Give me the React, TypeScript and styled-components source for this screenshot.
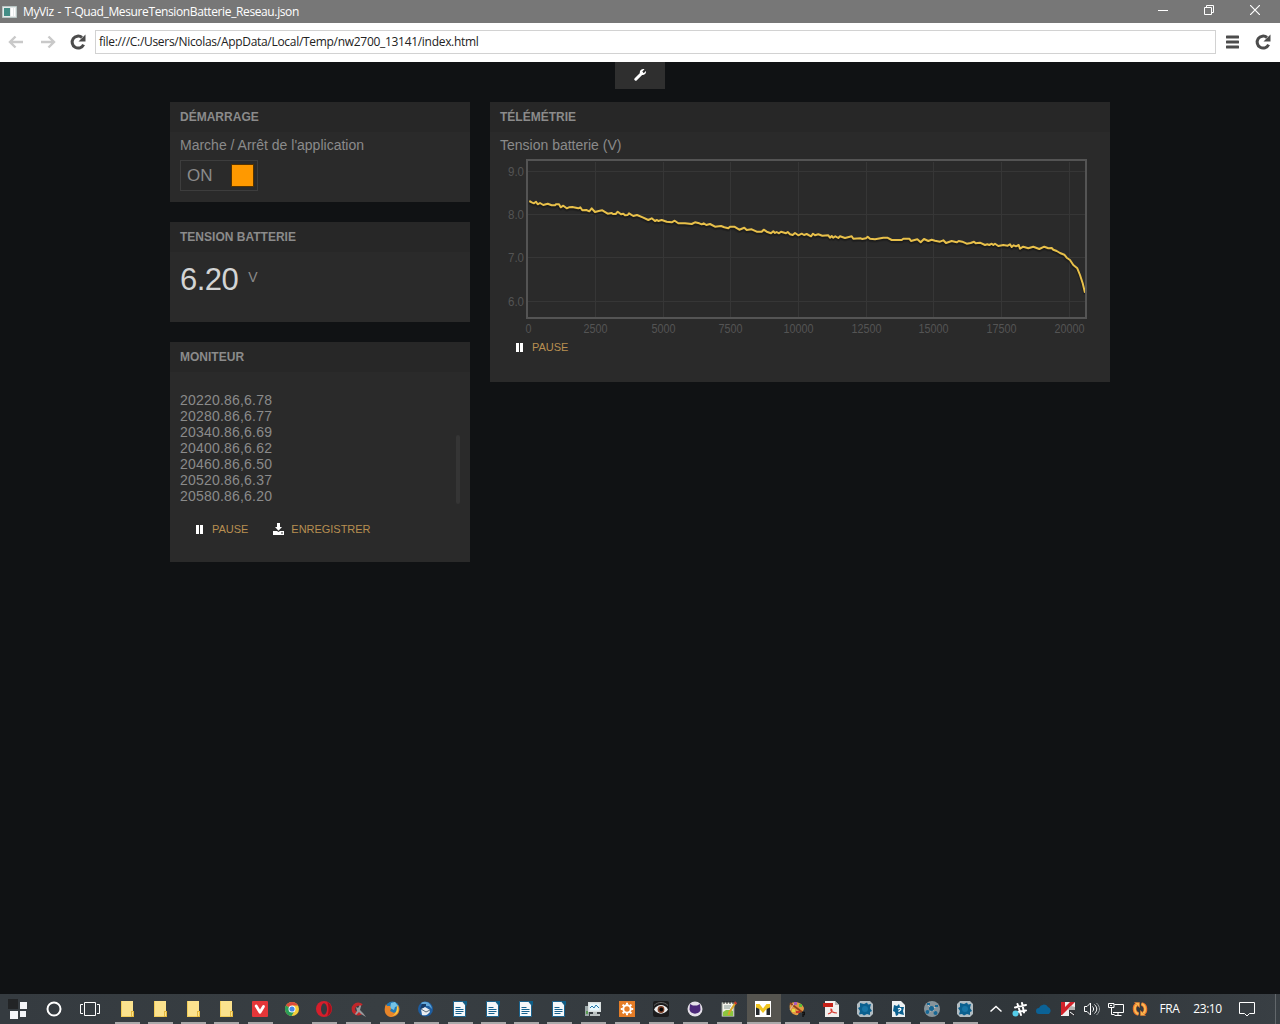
import React from "react";
import styled, { createGlobalStyle } from "styled-components";

const GlobalStyle = createGlobalStyle`
  * { box-sizing: border-box; }
  html, body { margin: 0; padding: 0; background: #101214; }
  body { font-family: "Liberation Sans", Arial, sans-serif; overflow: hidden; }
  svg { display: block; flex: none; }
`;

const Screen = styled.div`
  width: 1280px;
  height: 1024px;
  display: flex;
  flex-direction: column;
  background: #101214;
`;

/* ---------- window chrome ---------- */

const TitleBar = styled.header`
  height: 23px;
  flex: none;
  display: flex;
  align-items: center;
  padding: 0 2px;
  background: #777;
  color: #fff;
`;

const WindowTitle = styled.span`
  flex: 1;
  margin-left: 6px;
  font: 12px/22px "Open Sans", "Noto Sans", sans-serif;
  letter-spacing: -0.38px;
  word-spacing: 1px;
  white-space: nowrap;
`;

const WindowButton = styled.div`
  width: 46px;
  height: 23px;
  display: flex;
  align-items: flex-start;
  justify-content: center;
  padding-top: 5px;
`;

const NavBar = styled.nav`
  height: 39px;
  flex: none;
  display: flex;
  align-items: center;
  padding-bottom: 1px;
  background: #fff;
`;

const NavButton = styled.div<{ $w: number }>`
  width: ${(p) => p.$w}px;
  display: flex;
  justify-content: center;
`;

const AddressField = styled.div`
  width: 1121px;
  height: 24px;
  margin-left: 2px;
  padding-left: 3px;
  border: 1px solid #d2d2d2;
  color: #222;
  font: 12px/22px "Open Sans", "Noto Sans", sans-serif;
  letter-spacing: -0.3px;
  white-space: nowrap;
`;

/* ---------- dashboard ---------- */

const Page = styled.main`
  flex: 1;
  min-height: 0;
  display: flex;
  flex-direction: column;
  align-items: center;
`;

const ToolsTab = styled.div`
  width: 50px;
  height: 27px;
  display: flex;
  align-items: center;
  justify-content: center;
  padding-bottom: 1px;
  background: #2f2f2f;
`;

const Board = styled.div`
  width: 940px;
  margin-top: 13px;
  display: flex;
  align-items: flex-start;
  gap: 20px;
`;

const Column = styled.div<{ $w: number }>`
  width: ${(p) => p.$w}px;
  display: flex;
  flex-direction: column;
  gap: 20px;
`;

const Panel = styled.section<{ $h: number }>`
  height: ${(p) => p.$h}px;
  display: flex;
  flex-direction: column;
  background: #2a2a2a;
`;

const PanelTitle = styled.h2`
  margin: 0;
  height: 30px;
  flex: none;
  padding-left: 10px;
  background: #272727;
  color: #8b8b8b;
  font-size: 12px;
  font-weight: bold;
  line-height: 30px;
  letter-spacing: 0.01px;
`;

const PanelBody = styled.div`
  flex: 1;
  min-height: 0;
  padding: 0 10px;
`;

const Label = styled.div`
  height: 28px;
  color: #8b8b8b;
  font-size: 14px;
  line-height: 27px;
`;

const Toggle = styled.div`
  width: 78px;
  height: 31px;
  display: flex;
  align-items: center;
  justify-content: space-between;
  padding: 0 3px 0 6px;
  border: 1px solid #3d3d3d;
  color: #8b8b8b;
  font-size: 17px;
`;

const Knob = styled.div`
  width: 23px;
  height: 23px;
  background: #ff9900;
  border: 1px solid #553300;
`;

const Reading = styled.div`
  display: flex;
  align-items: flex-start;
  padding-top: 10px;
`;

const ReadingValue = styled.span`
  color: #d3d4d4;
  font-size: 31px;
  line-height: 36px;
  letter-spacing: -0.5px;
`;

const ReadingUnit = styled.span`
  margin-left: 10px;
  color: #8b8b8b;
  font-size: 14px;
  line-height: 30px;
`;

const Monitor = styled.div`
  height: 112px;
  margin-top: 20px;
  display: flex;
  justify-content: space-between;
  align-items: flex-end;
`;

const MonitorLines = styled.div`
  align-self: flex-start;
  color: #8b8b8b;
  font-size: 14px;
  line-height: 16px;
  letter-spacing: 0.2px;
`;

const ScrollThumb = styled.div`
  width: 4px;
  height: 69px;
  border-radius: 2px;
  background: #353535;
`;

const Actions = styled.div<{ $top: number }>`
  display: flex;
  gap: 25px;
  margin-top: ${(p) => p.$top}px;
  padding-left: 16px;
`;

const Action = styled.div`
  height: 16px;
  display: flex;
  align-items: center;
  color: #b88f51;
  font-size: 11px;
  line-height: 16px;
`;

const ActionText = styled.span<{ $gap: number }>`
  margin-left: ${(p) => p.$gap}px;
  letter-spacing: -0.03px;
`;

const ChartSlot = styled.div`
  height: 178px;
  svg { overflow: visible; }
`;

const ChartText = styled.text`
  fill: #545454;
  font-family: "Liberation Sans", Arial, sans-serif;
  font-size: 12px;
`;

/* ---------- taskbar ---------- */

const Taskbar = styled.footer`
  height: 30px;
  flex: none;
  display: flex;
  background: linear-gradient(90deg, #353b40, #383e42 30%, #33393e 62%, #30363a 80%, #393f44);
  color: #fff;
`;

const TaskCell = styled.div<{ $w: number; $open?: boolean; $active?: boolean }>`
  width: ${(p) => p.$w}px;
  height: 30px;
  flex: none;
  display: flex;
  flex-direction: column;
  align-items: flex-start;
  padding-top: 7px;
  background: ${(p) => (p.$active ? "#55544f" : "transparent")};
  svg { margin-left: 8px; }
  &::after {
    content: "";
    display: ${(p) => (p.$open ? "block" : "none")};
    width: ${(p) => (p.$active ? "100%" : "25px")};
    height: 2px;
    margin: 5px 0 0 ${(p) => (p.$active ? 0 : 4)}px;
    background: #aaa9aa;
  }
`;

const LauncherCell = styled.div<{ $w: number }>`
  width: ${(p) => p.$w}px;
  display: flex;
  align-items: center;
  justify-content: center;
  flex: none;
`;

const TaskList = styled.div`
  display: flex;
  width: 873px;
  flex: none;
  margin-left: 3px;
`;

const TrayText = styled.span<{ $w: number }>`
  width: ${(p) => p.$w}px;
  text-align: center;
  font: 12px/29px "Open Sans", "Noto Sans", sans-serif;
  letter-spacing: -0.45px;
`;

const DesktopEdge = styled.div`
  width: 5px;
  margin-left: auto;
  border-left: 1px solid #62676b;
`;

/* ---------- icons ---------- */

const Reload = () => (
  <svg width="18" height="18" viewBox="0 0 18 18">
    <path d="M14.600 11.600A6 6 0 1 1 13 4.500" fill="none" stroke="#4c4c4c" strokeWidth="3" />
    <path d="M16.500 1.400v7H9.500z" fill="#4c4c4c" />
  </svg>
);

const Arrow = ({ flip }: { flip?: boolean }) => (
  <svg width="16" height="14" viewBox="0 0 16 14">
    <path
      d="M15 7H2.500M7.500 1.500 2 7l5.500 5.500"
      transform={flip ? "translate(16 0) scale(-1 1)" : undefined}
      fill="none"
      stroke="#c9c9c9"
      strokeWidth="2.400"
    />
  </svg>
);

const PauseIcon = () => (
  <svg width="8" height="10" viewBox="0 0 8 10" fill="#fff">
    <path d="M0 1h3v9H0zM4 1h3v9H4z" />
  </svg>
);

const SaveIcon = () => (
  <svg width="11" height="12" viewBox="0 0 11 12" fill="#fff">
    <path d="M4 0h3v4h2L5.500 7.700 2 4h2zM0 8h4l1.500 1L7 8h4v4H0z" />
    <path d="M8 9.500h2v1H8z" fill="#2a2a2a" />
  </svg>
);

const Doc = () => (
  <>
    <path d="M1.500.5h9L13.500 4v11.500h-12z" fill="#f5f8fa" stroke="#1b648e" />
    <path d="M10.500 0H15v5z" fill="#0d5e88" />
    <path d="M3.500 6.500h5M3.500 8.500h8M3.500 10.500h8M3.500 12.500h6" stroke="#17628e" strokeWidth="1.200" />
  </>
);

const Splat = () => (
  <>
    <path d="M3 0h10l3 3v10l-3 3H3l-3-3V3z" fill="#b2bdc3" />
    <path d="m3 2 4 1 3-1.500 1 2 3-.5-1 4 2 3-2 1v3l-3-1-3 1.500L5 13l-3 .5L3 10 1 7l2-1z" fill="#0b608f" />
    <circle cx="8" cy="8" r="3" fill="#1875a6" />
  </>
);

const art: Record<string, React.ReactNode> = {
  folder: (
    <>
      <path d="M2 0h12v10h1v6H2z" fill="#fbe28e" />
      <path d="M2 0h1v16H2zM2 15h12v1H2z" fill="#f1cc59" />
      <path d="M12 10h3v6h-3z" fill="#e4b83e" />
      <path d="M13 11h1v4h-1z" fill="#fbe28e" />
    </>
  ),
  vivaldi: (
    <>
      <rect width="16" height="16" rx="1" fill="#e43639" />
      <path d="M4.200 5 8 11.300 11.500 5.500" fill="none" stroke="#fff" strokeWidth="2.800" strokeLinecap="round" strokeLinejoin="round" />
    </>
  ),
  chrome: (
    <>
      <circle cx="8" cy="8" r="7" fill="#f4ce3c" />
      <path d="M8 8 1.900 4.500A7 7 0 0 1 14.100 4.500H8z" fill="#db4a3c" />
      <path d="M1.900 4.500A7 7 0 0 0 7.500 15L11 9 8 8z" fill="#2b9e58" />
      <circle cx="8" cy="8" r="3.500" fill="#fff" />
      <circle cx="8" cy="8" r="2.600" fill="#4487e8" />
    </>
  ),
  opera: (
    <>
      <circle cx="8" cy="8" r="8" fill="#d51e2b" />
      <ellipse cx="8" cy="8" rx="3" ry="5.700" fill="#343a3f" />
      <path d="M11 1c6 3 6 11 0 14 2-3 2-11 0-14z" fill="#a3101c" />
    </>
  ),
  ccleaner: (
    <>
      <path d="M11.500 4.500A4.800 4.800 0 1 0 11.500 11.500" fill="none" stroke="#c1272a" strokeWidth="3.600" />
      <path d="m6 6 2 1 2-3 1 1-1 4 3 3 3 4-5-3-2-2-3 3-1-1 2-3z" fill="#999a9c" />
    </>
  ),
  firefox: (
    <>
      <circle cx="8.500" cy="7.500" r="7" fill="#2379b5" />
      <path d="M7 2 11 1l3 4-3 1-1 3-4-2z" fill="#73c3e6" />
      <path d="M2 3 3 5l3 0 1 3-1 2 4 2 3-2 1-6c3 5 1 11-6 12C1 16-1 9 2 3z" fill="#e7852a" />
      <path d="M13 4c3 5 1 10-5 11 4-2 5-5 5-11z" fill="#f6cd45" />
    </>
  ),
  thunderbird: (
    <>
      <circle cx="7.500" cy="8" r="7.500" fill="#1d5da0" />
      <path d="M3 2c5-3 10 0 11 6l-3-3-6 0z" fill="#61a6d8" />
      <path d="M3 8 7 6l5 3c0 4-4 6-8 5z" fill="#e9edf1" />
      <path d="m3 8 5 3 4-2" fill="none" stroke="#5a6b7b" />
      <path d="M4 3h4v2L5 7 2 8z" fill="#173c68" />
    </>
  ),
  doc: <Doc />,
  monitor: (
    <>
      <path d="M0 5h4v10H0z" fill="#9ca8a8" />
      <path d="M3 1h13v10H3z" fill="#d9dfdf" />
      <path d="M4.500 2.500h10v7h-10z" fill="#e9f9fe" />
      <path d="m5 7 2-2 2 2 2-3 3 3" fill="none" stroke="#2579ac" />
      <path d="M8 11h4v2h3v2H5v-2h3z" fill="#bac1c1" />
      <path d="M1 10h2v3H1z" fill="#5b9c54" />
    </>
  ),
  gear: (
    <>
      <rect width="16" height="16" fill="#e57d27" />
      <circle cx="8" cy="8" r="3.700" fill="none" stroke="#fff" strokeWidth="2" />
      <path d="M8 1.800v2M8 12.200v2M1.800 8h2M12.200 8h2M3.600 3.600 5 5M11 11l1.400 1.400M3.600 12.400 5 11M11 5l1.400-1.400" stroke="#fff" strokeWidth="2" />
    </>
  ),
  eye: (
    <>
      <rect width="16" height="16" rx="2" fill="#1b1b1c" />
      <path d="M1 8.500c3-6 11-6 14 0-3 5.500-11 5.500-14 0z" fill="#eee" />
      <circle cx="8" cy="8.500" r="3.400" fill="#7b3d25" />
      <circle cx="8.300" cy="8.500" r="1.900" fill="#050505" />
      <path d="M1 4.500c4-4 10-4 14 0" fill="none" stroke="#666" />
    </>
  ),
  github: (
    <>
      <circle cx="8" cy="8" r="7.500" fill="#e4e0e8" />
      <path d="m3 3 3 1.500h4L13 3l.5 5.500C13 14 3 14 2.500 8.500z" fill="#4b2879" />
    </>
  ),
  notepad: (
    <>
      <path d="M1 1.500h12v14H1z" fill="#f2f2e9" stroke="#8c938d" />
      <path d="m2 11 3-2h5l2 1v5H2z" fill="#8cc63f" />
      <path d="M3 0v3M6 0v3M9 0v3M12 0v3" stroke="#222" />
      <path d="M3 5h7M3 7h6" stroke="#8a9c98" />
      <path d="m14.500 2-6 9-1 3" fill="none" stroke="#d7a52b" strokeWidth="2" />
      <path d="m13.500 1 2 2" stroke="#c4382b" strokeWidth="2" />
    </>
  ),
  myviz: (
    <>
      <path d="M0 0h16v16H0z" fill="#fff" />
      <path d="M1 5h3.500v9H1zM11.500 5H15v9h-3.500z" fill="#25282c" />
      <path d="M1 3h3.500L8 7.500 11.500 3H15v3.500L11.500 8 8 12 4.500 8 1 6.500z" fill="#f0c41e" />
    </>
  ),
  palette: (
    <>
      <path d="M1 3c4-4 12-2 14 4 0 3-2 5-5 4l-1 3C5 15-1 11 1 3z" fill="#e29a42" />
      <path d="m1 2 12 9" stroke="#933e1b" strokeWidth="1.600" />
      <path d="m1 9 5-8" stroke="#deb9a4" />
      <path d="M5 1h3v3H5z" fill="#a95bba" />
      <path d="M10 3h3v3h-3z" fill="#62bb37" />
      <path d="M3 8h3v3H3z" fill="#e5dd43" />
      <path d="M7 10h4v2H7z" fill="#c73728" />
      <path d="M13 11.500h2.500v2H14V16" fill="none" stroke="#111" strokeWidth="1.400" />
    </>
  ),
  pdf: (
    <>
      <path d="M2 0h10l4 4v12H2z" fill="#f1efed" />
      <path d="M0 2h10v4H0z" fill="#c52219" />
      <path d="M12 0v4h4" fill="#bab5b3" />
      <path d="M5 13c4-1 5-4 3-5-1 2 2 4 6 4" fill="none" stroke="#d83c31" strokeWidth="1.200" />
    </>
  ),
  splat: <Splat />,
  help: (
    <>
      <path d="M2 0h9l4 4v12H2z" fill="#eef1f2" />
      <path d="m4 4 3 1 2-2 1 3 4 0-1 4 1 4-4-1-4 2-1-4-2-1z" fill="#0b608f" />
      <path d="M8 8c3-2 4 1 1 2v1M9 12.500v1.500" fill="none" stroke="#fff" strokeWidth="1.300" />
    </>
  ),
  network: (
    <>
      <circle cx="8" cy="8" r="8" fill="#87949b" />
      <path d="m3 3 5 5 5-3M8 8l-4 5M8 8l5 5" stroke="#bbc4c9" fill="none" />
      <circle cx="7.500" cy="7.500" r="2.500" fill="#176794" />
      <circle cx="3.500" cy="11" r="2" fill="#176794" />
      <circle cx="11.500" cy="12" r="2" fill="#176794" />
      <path d="M3 2h3v2H3zM11 4h3v2h-3z" fill="#176794" />
    </>
  ),
  chevron: <path d="m2.500 10.500 5.500-5 5.500 5" fill="none" stroke="#fff" strokeWidth="1.500" />,
  hash: (
    <>
      <path d="m5.500 3 3.500 11M10 2l2 9.500M3 6.500l11-2.500M5 11l9-1.500" stroke="#fff" strokeWidth="2" strokeLinecap="round" />
      <circle cx="3.500" cy="12.500" r="3" fill="#55cde9" />
    </>
  ),
  cloud: <path d="M3 13a3 3 0 0 1 0-6 5 5 0 0 1 9-1 4 4 0 0 1 1 7z" fill="#0b6296" />,
  kaspersky: (
    <>
      <path d="M1 1h14v14H1z" fill="#f0efee" />
      <path d="M1 1h4v5l5-5h5L8 8l-6 6H1z" fill="#d4232b" />
      <path d="m8 8 3-3 4 1v4h-5z" fill="#b5b1b1" />
      <path d="M9 9h6v6H9z" fill="#303236" />
      <path d="m10 11 4 3" stroke="#fff" />
    </>
  ),
  volume: (
    <g fill="none" stroke="#fff">
      <path d="M.5 5.500H3l3.500-3.500v12L3 10.500H.5z" />
      <path d="M8.500 5.500c1.500 1.500 1.500 3.500 0 5M10.500 3.500c3 3 3 6 0 9" />
      <path d="M12.500 2c4 4 4 8 0 12" stroke="#9fa5a8" />
    </g>
  ),
  lan: (
    <g fill="none" stroke="#fff">
      <path d="M6.500 3.500h9v8H5M10 12v2.500M6.500 14.500h7" />
      <path d="M.5 2.500H6v4H.5zM2 4.500h2" />
      <path d="M3.500 6.500v7h3" />
    </g>
  ),
  sync: (
    <>
      <path d="M6.500 13C1.500 12 1.500 5 5 3.500M9.500 3c5 1 5 8 1.500 9.500" fill="none" stroke="#ee752a" strokeWidth="3.600" />
      <path d="M6.500 13C2 12 2 5 5 3.500M9.500 3c4.500 1 4.500 8 1.500 9.500" fill="none" stroke="#f8ba54" strokeWidth="1.800" />
      <path d="M2.500 1.500h5v5zM13.500 14.500h-5v-5z" fill="#f8b54c" stroke="#ee752a" strokeWidth=".5" />
    </>
  ),
};

const Glyph = ({ name }: { name: string }) => (
  <svg width="16" height="16" viewBox="0 0 16 16">
    {art[name]}
  </svg>
);

/* ---------- data ---------- */

const tasks: { icon: string; w: number; closed?: boolean; active?: boolean }[] = [
  { icon: "folder", w: 33 },
  { icon: "folder", w: 33 },
  { icon: "folder", w: 33 },
  { icon: "folder", w: 34 },
  { icon: "vivaldi", w: 32 },
  { icon: "chrome", w: 32, closed: true },
  { icon: "opera", w: 34 },
  { icon: "ccleaner", w: 34 },
  { icon: "firefox", w: 34 },
  { icon: "thunderbird", w: 34 },
  { icon: "doc", w: 33 },
  { icon: "doc", w: 33 },
  { icon: "doc", w: 33 },
  { icon: "doc", w: 34 },
  { icon: "monitor", w: 34 },
  { icon: "gear", w: 34 },
  { icon: "eye", w: 34 },
  { icon: "github", w: 34 },
  { icon: "notepad", w: 34 },
  { icon: "myviz", w: 34, active: true },
  { icon: "palette", w: 34 },
  { icon: "pdf", w: 34 },
  { icon: "splat", w: 33 },
  { icon: "help", w: 34 },
  { icon: "network", w: 33 },
  { icon: "splat", w: 33 },
];

const tray = ["chevron", "hash", "cloud", "kaspersky", "volume", "lan", "sync"];

const samples = [
  "20220.86,6.78",
  "20280.86,6.77",
  "20340.86,6.69",
  "20400.86,6.62",
  "20460.86,6.50",
  "20520.86,6.37",
  "20580.86,6.20",
];

const xTicks: [number, string][] = [
  [28.5, "0"],
  [95.5, "2500"],
  [163.5, "5000"],
  [230.5, "7500"],
  [298.5, "10000"],
  [366.5, "12500"],
  [433.5, "15000"],
  [501.5, "17500"],
  [569.5, "20000"],
];

const yTicks: [number, string][] = [
  [11.5, "9.0"],
  [54.5, "8.0"],
  [97.5, "7.0"],
  [141.5, "6.0"],
];

/* Curve samples at three units per pixel. */
const curve =
  "133,318 140,322 147,325 153,320 158,328 165,324 175,330 188,326 200,331 210,331 213,328 222,328 227,337 235,332 245,340 252,337 262,336 280,340 286,337 292,346 304,345 313,349 320,340 330,351 341,348 352,346 368,356 380,354 384,357 392,357 398,350 408,358 415,356 420,361 428,360 432,355 445,363 456,360 475,368 490,375 500,370 510,378 516,375 520,378 530,375 545,380 560,382 569,377 580,385 600,385 620,387 630,382 643,385 650,388 656,385 664,390 675,387 690,395 708,393 718,397 730,400 735,395 748,395 763,404 778,398 785,405 800,403 815,410 830,410 836,404 845,410 858,415 865,409 870,414 875,411 882,415 888,410 903,415 908,411 915,418 923,420 930,414 940,421 950,416 957,420 965,417 978,424 984,416 990,421 1000,418 1012,422 1030,421 1035,428 1040,423 1045,428 1051,424 1060,429 1065,424 1080,429 1100,424 1105,431 1127,430 1132,432 1143,430 1148,425 1155,431 1170,433 1195,428 1207,428 1220,435 1250,435 1255,431 1273,431 1278,438 1297,433 1307,442 1317,432 1330,438 1340,434 1350,437 1365,440 1375,436 1383,444 1400,438 1415,442 1421,438 1432,440 1445,446 1457,444 1467,440 1472,445 1485,443 1500,450 1507,448 1513,450 1520,446 1525,450 1530,446 1540,453 1555,450 1568,452 1575,448 1580,456 1586,451 1593,454 1601,450 1605,461 1615,455 1630,460 1645,455 1663,462 1678,455 1690,460 1700,459 1705,464 1715,468 1725,474 1738,479 1745,488 1755,495 1765,510 1777,520 1785,540 1793,565 1800,593"
    .split(" ")
    .map((pair) => {
      const [x, y] = pair.split(",").map(Number);
      return `${(x / 3 - 15).toFixed(1)},${(y / 3 - 65).toFixed(1)}`;
    })
    .join(" ");

const Chart = () => (
  <svg width="600" height="178" viewBox="0 0 600 178">
    {xTicks.slice(1).map(([x]) => (
      <path key={x} d={`M${x} 2V157`} stroke="#363636" />
    ))}
    {yTicks.map(([y]) => (
      <path key={y} d={`M28 ${y}H585`} stroke="#363636" />
    ))}
    <g fill="none" strokeLinejoin="round">
      <polyline points={curve} stroke="#000" strokeOpacity="0.15" strokeWidth="4" transform="translate(0 1.500)" />
      <polyline points={curve} stroke="#000" strokeOpacity="0.2" strokeWidth="2" transform="translate(0 1.500)" />
      <polyline points={curve} stroke="#e8c04a" strokeWidth="2" />
    </g>
    <rect x="27" y="0" width="559" height="158" fill="none" stroke="#545454" strokeWidth="2" />
    {yTicks.map(([y, label]) => (
      <ChartText key={label} x="24" y={y + 4.5} textAnchor="end" textLength="16" lengthAdjust="spacingAndGlyphs">
        {label}
      </ChartText>
    ))}
    {xTicks.map(([x, label]) => (
      <ChartText key={label} x={x} y="173" textAnchor="middle" textLength={label.length * 6} lengthAdjust="spacingAndGlyphs">
        {label}
      </ChartText>
    ))}
  </svg>
);

const PauseAction = () => (
  <Action>
    <PauseIcon />
    <ActionText $gap={8}>PAUSE</ActionText>
  </Action>
);

export default function App() {
  return (
    <Screen>
      <GlobalStyle />
      <TitleBar>
        <svg width="15" height="12" viewBox="0 0 15 12">
          <path d="M.5.5h14v11H.5z" fill="#e6eaea" stroke="#b9c6c5" />
          <path d="M2 2h6v8H2z" fill="#438d86" />
          <path d="M9 2h2v8H9zM12 2h1v8h-1z" fill="#fff" />
        </svg>
        <WindowTitle>MyViz - T-Quad_MesureTensionBatterie_Reseau.json</WindowTitle>
        <WindowButton>
          <svg width="10" height="10" viewBox="0 0 10 10"><path d="M0 5.500h10" stroke="#fff" /></svg>
        </WindowButton>
        <WindowButton>
          <svg width="10" height="10" viewBox="0 0 10 10" fill="none" stroke="#fff">
            <path d="M.5 2.500h7v7h-7zM2.500 2V.5h7v7H8" />
          </svg>
        </WindowButton>
        <WindowButton>
          <svg width="10" height="10" viewBox="0 0 10 10"><path d="m0 0 10 10M10 0 0 10" stroke="#fff" strokeWidth="1.200" /></svg>
        </WindowButton>
      </TitleBar>
      <NavBar>
        <NavButton $w={32}><Arrow /></NavButton>
        <NavButton $w={31}><Arrow flip /></NavButton>
        <NavButton $w={30}><Reload /></NavButton>
        <AddressField>file:///C:/Users/Nicolas/AppData/Local/Temp/nw2700_13141/index.html</AddressField>
        <NavButton $w={33}>
          <svg width="13" height="14" viewBox="0 0 13 14">
            <path d="M1 2h11M1 7h11M1 12h11" stroke="#4c4c4c" strokeWidth="3" strokeLinecap="round" />
          </svg>
        </NavButton>
        <NavButton $w={28}><Reload /></NavButton>
      </NavBar>

      <Page>
        <ToolsTab>
          <svg width="12" height="12" viewBox="0 0 12 12">
            <path d="m1.800 10.200 6-6" stroke="#fff" strokeWidth="3" strokeLinecap="round" />
            <path d="M10.500.3 8.300 2.500l.4 1.200 1.200.3 2-2C12.500 4.500 10.500 6.500 8 6L5.800 4C5.500 1.500 8-.5 10.500.3z" fill="#fff" />
          </svg>
        </ToolsTab>
        <Board>
          <Column $w={300}>
            <Panel $h={100}>
              <PanelTitle>DÉMARRAGE</PanelTitle>
              <PanelBody>
                <Label>Marche / Arrêt de l'application</Label>
                <Toggle>
                  ON
                  <Knob />
                </Toggle>
              </PanelBody>
            </Panel>
            <Panel $h={100}>
              <PanelTitle>TENSION BATTERIE</PanelTitle>
              <PanelBody>
                <Reading>
                  <ReadingValue>6.20</ReadingValue>
                  <ReadingUnit>V</ReadingUnit>
                </Reading>
              </PanelBody>
            </Panel>
            <Panel $h={220}>
              <PanelTitle>MONITEUR</PanelTitle>
              <PanelBody>
                <Monitor>
                  <MonitorLines>
                    {samples.map((line) => (
                      <div key={line}>{line}</div>
                    ))}
                  </MonitorLines>
                  <ScrollThumb />
                </Monitor>
                <Actions $top={17}>
                  <PauseAction />
                  <Action>
                    <SaveIcon />
                    <ActionText $gap={7}>ENREGISTRER</ActionText>
                  </Action>
                </Actions>
              </PanelBody>
            </Panel>
          </Column>
          <Column $w={620}>
            <Panel $h={280}>
              <PanelTitle>TÉLÉMÉTRIE</PanelTitle>
              <PanelBody>
                <Label>Tension batterie (V)</Label>
                <ChartSlot>
                  <Chart />
                </ChartSlot>
                <Actions $top={1}>
                  <PauseAction />
                </Actions>
              </PanelBody>
            </Panel>
          </Column>
        </Board>
      </Page>

      <Taskbar>
        <LauncherCell $w={36}>
          <svg width="20" height="20" viewBox="0 0 20 20">
            <path d="M0 0h10v10H0z" fill="#222426" />
            <path d="M12 3h7v7h-7zM2 12h8v8H2zM12 12h6v6h-6z" fill="#f4f5f8" />
          </svg>
        </LauncherCell>
        <LauncherCell $w={36}>
          <svg width="16" height="16" viewBox="0 0 16 16"><circle cx="8" cy="8" r="6.500" fill="none" stroke="#fff" strokeWidth="2" /></svg>
        </LauncherCell>
        <LauncherCell $w={36}>
          <svg width="20" height="14" viewBox="0 0 20 14">
            <path d="M4.500.5h11v13h-11zM3 2.500H.5v9H3M17 2.500h2.500v9H17" fill="none" stroke="#fff" />
          </svg>
        </LauncherCell>
        <TaskList>
          {tasks.map((task, i) => (
            <TaskCell key={i} $w={task.w} $open={!task.closed} $active={task.active}>
              <Glyph name={task.icon} />
            </TaskCell>
          ))}
        </TaskList>
        {tray.map((name) => (
          <LauncherCell key={name} $w={24}>
            <Glyph name={name} />
          </LauncherCell>
        ))}
        <TrayText $w={35}>FRA</TrayText>
        <TrayText $w={41}>23:10</TrayText>
        <LauncherCell $w={38}>
          <svg width="16" height="16" viewBox="0 0 16 16">
            <path d="M.5 1.500h15v11h-5L8 15l-2.500-2.500h-5z" fill="none" stroke="#fff" />
          </svg>
        </LauncherCell>
        <DesktopEdge />
      </Taskbar>
    </Screen>
  );
}
